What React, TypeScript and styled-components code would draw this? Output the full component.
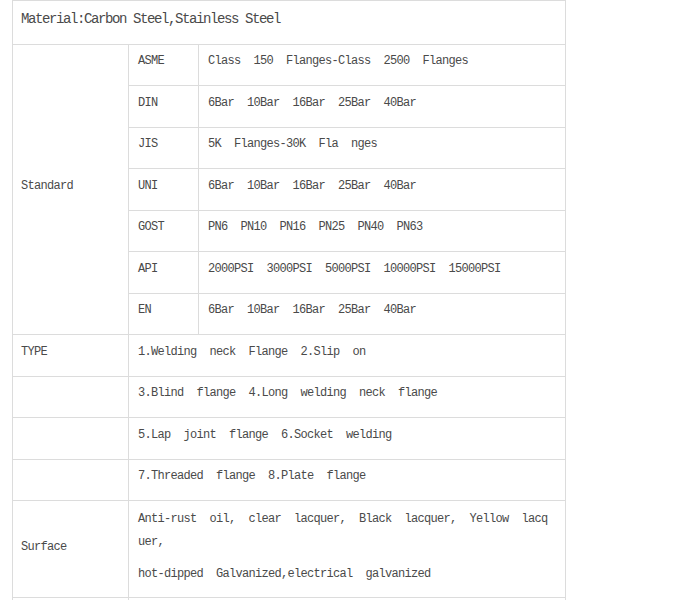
import React from "react";
import styled, { createGlobalStyle } from "styled-components";

const Global = createGlobalStyle`
  html, body { margin: 0; padding: 0; background: #ffffff; }
  body { font-family: "Liberation Mono", "DejaVu Sans Mono", monospace; }
`;

const Page = styled.div`
  padding: 0 0 0 12px;
  width: 553px;
`;

const Table = styled.table`
  width: 553px;
  border-collapse: collapse;
  table-layout: fixed;
  color: #4a4a4a;
`;

const Col = styled.col<{ $w: number }>`
  width: ${(p) => p.$w}px;
`;

const Cell = styled.td<{ $big?: boolean; $first?: boolean; $tall?: boolean }>`
  border: 1px solid #dcdcdc;
  padding: ${(p) => (p.$tall ? 7 : 5.5)}px 14px ${(p) => (p.$tall ? 2 : 3)}px
    ${(p) => (p.$first ? 8 : 9)}px;
  vertical-align: middle;
  font-size: ${(p) => (p.$big ? 14 : 12)}px;
  letter-spacing: ${(p) => (p.$big ? -1.4 : -0.7)}px;
  white-space: pre-wrap;
  word-break: break-all;
`;

const Para = styled.p<{ $big?: boolean }>`
  margin: 0 0 9px 0;
  line-height: ${(p) => (p.$big ? 25 : 23)}px;
`;

type Std = { name: string; value: string };

const standards: Std[] = [
  { name: "ASME", value: "Class  150  Flanges-Class  2500  Flanges" },
  { name: "DIN", value: "6Bar  10Bar  16Bar  25Bar  40Bar" },
  { name: "JIS", value: "5K  Flanges-30K  Fla  nges" },
  { name: "UNI", value: "6Bar  10Bar  16Bar  25Bar  40Bar" },
  { name: "GOST", value: "PN6  PN10  PN16  PN25  PN40  PN63" },
  { name: "API", value: "2000PSI  3000PSI  5000PSI  10000PSI  15000PSI" },
  { name: "EN", value: "6Bar  10Bar  16Bar  25Bar  40Bar" },
];

const types = [
  "1.Welding  neck  Flange  2.Slip  on",
  "3.Blind  flange  4.Long  welding  neck  flange",
  "5.Lap  joint  flange  6.Socket  welding",
  "7.Threaded  flange  8.Plate  flange",
];

export default function App() {
  return (
    <Page>
      <Global />
      <Table>
        <colgroup>
          <Col $w={116} />
          <Col $w={70} />
          <Col $w={367} />
        </colgroup>
        <tbody>
          <tr>
            <Cell colSpan={3} $big $first>
              <Para $big>Material:Carbon Steel,Stainless Steel</Para>
            </Cell>
          </tr>
          {standards.map((s, i) => (
            <tr key={s.name}>
              {i === 0 && (
                <Cell rowSpan={standards.length} $first>
                  <Para>Standard</Para>
                </Cell>
              )}
              <Cell>
                <Para>{s.name}</Para>
              </Cell>
              <Cell>
                <Para>{s.value}</Para>
              </Cell>
            </tr>
          ))}
          {types.map((t, i) => (
            <tr key={t}>
              <Cell $first>
                <Para>{i === 0 ? "TYPE" : "\u00a0"}</Para>
              </Cell>
              <Cell colSpan={2}>
                <Para>{t}</Para>
              </Cell>
            </tr>
          ))}
          <tr>
            <Cell $first $tall>
              <Para>Surface</Para>
            </Cell>
            <Cell colSpan={2} $tall>
              <Para>Anti-rust  oil,  clear  lacquer,  Black  lacquer,  Yellow  lacquer,</Para>
              <Para>hot-dipped  Galvanized,electrical  galvanized</Para>
            </Cell>
          </tr>
          <tr>
            <Cell $first>
              <Para>{"\u00a0"}</Para>
            </Cell>
            <Cell colSpan={2}>
              <Para>{"\u00a0"}</Para>
            </Cell>
          </tr>
        </tbody>
      </Table>
    </Page>
  );
}
